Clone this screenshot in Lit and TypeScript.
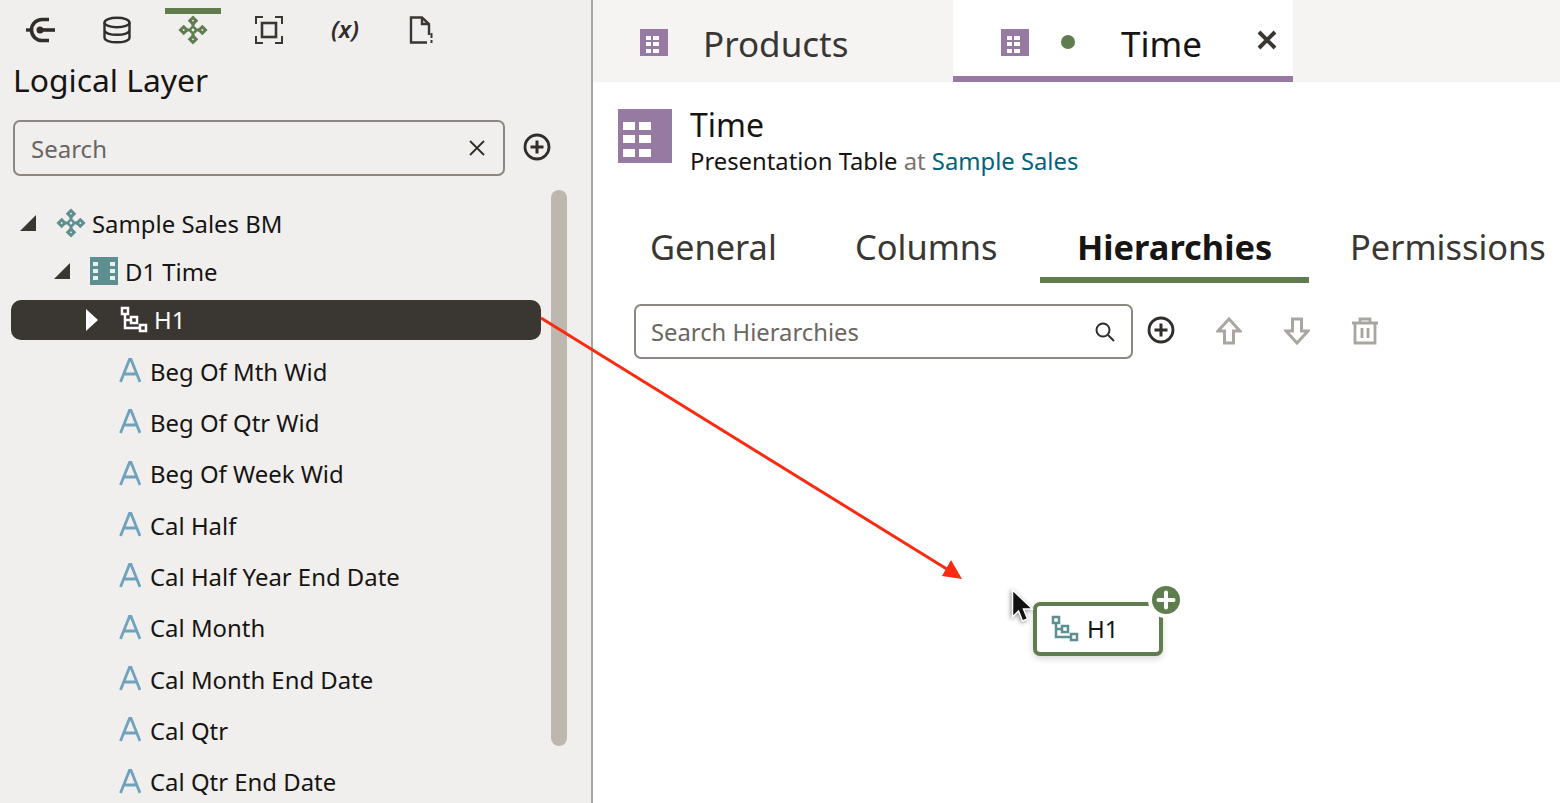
import { LitElement, html, css, svg } from 'lit';
import { customElement } from 'lit/decorators.js';

const ATTRIBUTES = [
  'Beg Of Mth Wid',
  'Beg Of Qtr Wid',
  'Beg Of Week Wid',
  'Cal Half',
  'Cal Half Year End Date',
  'Cal Month',
  'Cal Month End Date',
  'Cal Qtr',
  'Cal Qtr End Date',
];

const modelIcon = (color: string, size: number) => html`
  <svg width=${size} height=${size} viewBox="0 0 30 30" fill="none" stroke=${color} stroke-width="3">
    <path d="M15 2.500l3.200 3.200L15 8.900l-3.200-3.200zM15 21.100l3.200 3.200-3.200 3.200-3.200-3.200zM5.700 11.800l3.200 3.200-3.200 3.200L2.500 15zM24.300 11.800l3.200 3.200-3.200 3.200-3.200-3.200z" />
    <circle cx="15" cy="15" r="2.600" stroke-width="2.400" />
    <path d="M15 9v3.400M15 17.600V21M9 15h3.400M17.600 15H21" />
  </svg>
`;

const smallTableIcon = html`
  <svg width="28" height="27" viewBox="0 0 28 27">
    <rect width="28" height="27" fill="#967aa1" />
    <path fill="#fff" d="M6 7h5v4H6zM13 7h6v4h-6zM6 13h5v4H6zM13 13h6v4h-6zM6 20h5v4H6zM13 20h6v4h-6z" />
  </svg>
`;

const largeTableIcon = html`
  <svg width="54" height="54" viewBox="0 0 54 54">
    <rect width="54" height="54" fill="#967aa1" />
    <path fill="#fff" d="M5 13h12v8H5zM21 13h12v8H21zM5 26h12v8H5zM21 26h12v8H21zM5 40h12v8H5zM21 40h12v8H21z" />
  </svg>
`;

const hierarchyIcon = (color: string) => html`
  <svg width="28" height="28" viewBox="0 0 28 28" fill="none" stroke=${color} stroke-width="2.500">
    <rect x="2" y="2" width="6" height="6" />
    <rect x="11" y="11" width="6" height="6" />
    <rect x="20" y="19" width="6" height="6" />
    <path d="M5 8v14h15M5 14h6" />
  </svg>
`;

const attrIcon = svg`
  <path d="M1.500 24L10.500 1.500h1.500L21 24M5 16h12.500" fill="none" stroke="#6fa3bd" stroke-width="2.800" />
`;

const caret = (open: boolean, color: string) =>
  open
    ? html`<svg width="16" height="16" viewBox="0 0 16 16"><path d="M16 0v16H0z" fill=${color} /></svg>`
    : html`<svg width="14" height="24" viewBox="0 0 14 24"><path d="M1 1l12 11L1 23z" fill=${color} /></svg>`;

const plusCircle = html`
  <svg width="28" height="28" viewBox="0 0 28 28" fill="none" stroke="#312d2a">
    <circle cx="14" cy="14" r="12" stroke-width="2.800" />
    <path d="M7.500 14h13M14 7.500v13" stroke-width="3" />
  </svg>
`;

@customElement('tree-panel')
export class TreePanel extends LitElement {
  static styles = css`
    :host {
      display: flex;
      flex-direction: column;
      width: 591px;
      height: 803px;
      flex: none;
      box-sizing: border-box;
      background: #f1efed;
      overflow: hidden;
      color: #161513;
    }

    .toolbar {
      display: flex;
      height: 60px;
      padding-left: 3px;
    }

    .tool {
      width: 76px;
      height: 60px;
      box-sizing: border-box;
      display: flex;
      align-items: center;
      justify-content: center;
      position: relative;
    }

    .tool.active::before {
      content: '';
      position: absolute;
      left: 10px;
      right: 10px;
      top: 8px;
      height: 6px;
      background: #5f7d4f;
    }

    .fx {
      font: italic 600 24px 'Noto Sans', sans-serif;
      color: #312d2a;
      margin-top: -3px;
    }

    h1 {
      margin: 0;
      padding-left: 13px;
      font-size: 31.8px;
      line-height: 40px;
      font-weight: 400;
    }

    .search-row {
      display: flex;
      align-items: center;
      gap: 18px;
      margin: 20px 0 0 13px;
    }

    .search {
      box-sizing: border-box;
      width: 492px;
      height: 56px;
      border: 2px solid #8d8782;
      border-radius: 7px;
      padding: 0 18px 0 16px;
      display: flex;
      align-items: center;
      justify-content: space-between;
      font-size: 24px;
      color: #6b6661;
    }

    .add {
      display: flex;
      margin-top: -2px;
    }

    .body {
      display: flex;
      flex: 1;
      min-height: 0;
      margin-top: 14px;
    }

    .tree {
      width: 551px;
      flex: none;
      padding-top: 9px;
    }

    .row {
      display: flex;
      align-items: center;
      font-size: 23.9px;
      height: 48px;
      white-space: nowrap;
    }

    .root {
      padding-left: 20px;
      gap: 20px;
    }

    .root span {
      margin-left: -14px;
    }

    .dim {
      padding-left: 54px;
      gap: 20px;
    }

    .dim span {
      margin-left: -13px;
    }

    .selected {
      margin: 5px 10px 0 11px;
      height: 40px;
      border-radius: 10px;
      background: #3a3632;
      color: #fff;
      padding-left: 74px;
      gap: 21px;
    }

    .selected span {
      margin: -2px 0 0 -15px;
    }

    .attr {
      height: 51.33px;
      padding-left: 119px;
      gap: 9px;
    }

    .attrs {
      margin-top: 5.4px;
    }

    .thumb {
      width: 16px;
      height: 556px;
      border-radius: 8px;
      background: #bdb7b0;
    }
  `;

  render() {
    return html`
      <div class="toolbar">
        <div class="tool">
          <svg width="32" height="30" viewBox="0 0 32 30" fill="none" stroke="#312d2a">
            <path d="M24 4.500H17a10.500 10.500 0 0 0 0 21h7" stroke-width="3.600" />
            <path d="M1 15h6" stroke-width="3.400" />
            <path d="M16 15h14" stroke-width="3.600" />
            <circle cx="15" cy="15" r="3.500" fill="#312d2a" stroke="none" />
          </svg>
        </div>
        <div class="tool">
          <svg width="28" height="28" viewBox="0 0 28 28" fill="none" stroke="#312d2a" stroke-width="2.400">
            <ellipse cx="14" cy="6.500" rx="12.500" ry="4.800" />
            <path d="M1.500 6.500v15c0 3 5.600 4.800 12.500 4.800s12.500-1.800 12.500-4.800v-15M1.500 14c0 3 5.600 4.800 12.500 4.800S26.500 17 26.500 14" />
          </svg>
        </div>
        <div class="tool active">${modelIcon('#5f7d4f', 30)}</div>
        <div class="tool">
          <svg width="28" height="28" viewBox="0 0 28 28" fill="none" stroke="#3a3632">
            <path d="M1 8V1h7M20 1h7v7M27 20v7h-7M8 27H1v-7" stroke-width="2" />
            <rect x="7" y="7" width="14" height="14" stroke-width="2.600" />
          </svg>
        </div>
        <div class="tool"><span class="fx">(x)</span></div>
        <div class="tool">
          <svg width="24" height="28" viewBox="0 0 24 28" fill="none" stroke="#3a3632" stroke-width="2.400">
            <path d="M20 19V8l-7-6.500H2v25h16M13 1.500V8h7" />
            <path d="M22.500 17v5M22.500 24v3" stroke-width="2" />
          </svg>
        </div>
      </div>
      <h1>Logical Layer</h1>
      <div class="search-row">
        <div class="search">
          Search
          <svg width="16" height="16" viewBox="0 0 16 16" stroke="#312d2a" stroke-width="1.800"><path d="M1 1l14 14M15 1L1 15" /></svg>
        </div>
        <div class="add">${plusCircle}</div>
      </div>
      <div class="body">
        <div class="tree">
          <div class="row root">${caret(true, '#3a3632')}${modelIcon('#5e8f90', 30)}<span>Sample Sales BM</span></div>
          <div class="row dim">
            ${caret(true, '#3a3632')}
            <svg width="28" height="28" viewBox="0 0 28 28">
              <rect width="28" height="28" fill="#5e8f90" />
              <path fill="#e8f0f0" d="M3 5h5v4H3zM20 5h5v4h-5zM3 12h5v4H3zM20 12h5v4h-5zM3 19h5v4H3zM20 19h5v4h-5z" />
            </svg>
            <span>D1 Time</span>
          </div>
          <div class="row selected">${caret(false, '#fff')}${hierarchyIcon('#fff')}<span>H1</span></div>
          <div class="attrs">
            ${ATTRIBUTES.map(
              (name) => html`
                <div class="row attr">
                  <svg width="22" height="26" viewBox="0 0 22 26">${attrIcon}</svg>
                  <span>${name}</span>
                </div>
              `
            )}
          </div>
        </div>
        <div class="thumb"></div>
      </div>
    `;
  }
}

@customElement('detail-panel')
export class DetailPanel extends LitElement {
  static styles = css`
    :host {
      display: flex;
      flex-direction: column;
      flex: 1;
      min-width: 0;
      height: 803px;
      background: #fff;
      color: #161513;
      overflow: hidden;
    }

    .tabbar {
      display: flex;
      height: 82px;
      background: #f5f4f2;
      flex: none;
    }

    .tab {
      box-sizing: border-box;
      height: 82px;
      display: flex;
      align-items: center;
      font-size: 35px;
    }

    .tab span.label {
      margin-top: 2px;
    }

    .tab.products {
      width: 360px;
      padding: 2px 0 0 47px;
      gap: 35px;
      color: #3a3632;
    }

    .tab.time {
      width: 340px;
      background: #fff;
      border-bottom: 6px solid #967aa1;
      padding: 8px 0 0 48px;
    }

    .dot {
      width: 14px;
      height: 14px;
      border-radius: 50%;
      background: #5f7d4f;
      margin: 0 46px 0 32px;
    }

    .close {
      margin: -4px 0 0 55px;
    }

    .head {
      display: flex;
      align-items: flex-start;
      gap: 18px;
      margin: 26px 0 0 25px;
    }

    .head svg {
      margin-top: 1px;
    }

    .head-text {
      display: flex;
      flex-direction: column;
    }

    .title {
      font-size: 32px;
      line-height: 34px;
    }

    .sub {
      font-size: 23.8px;
      line-height: 38px;
    }

    .at {
      color: #7a746e;
    }

    .link {
      color: #04617c;
    }

    .tabs {
      display: flex;
      margin: 34px 0 0 28px;
      font-size: 34.4px;
      white-space: nowrap;
    }

    .subtab {
      box-sizing: border-box;
      flex: none;
      height: 69px;
      line-height: 66px;
      color: #3a3632;
    }

    .subtab.general {
      width: 205px;
      padding-left: 29px;
    }

    .subtab.columns {
      width: 214px;
      padding-left: 29px;
    }

    .subtab.on {
      width: 269px;
      padding-left: 37px;
      font-weight: 700;
      color: #161513;
      border-bottom: 6px solid #5f7d4f;
    }

    .subtab.perm {
      padding-left: 41px;
    }

    .actions {
      display: flex;
      align-items: center;
      margin: 21px 0 0 41px;
    }

    .search {
      box-sizing: border-box;
      width: 499px;
      height: 55px;
      border: 2px solid #8d8782;
      border-radius: 7px;
      padding: 0 16px 0 15px;
      display: flex;
      align-items: center;
      justify-content: space-between;
      font-size: 23.8px;
      color: #6b6661;
      margin-right: 14px;
    }

    .action {
      width: 68px;
      display: flex;
      justify-content: center;
      margin-left: -20px;
      margin-right: 20px;
    }

    .action svg {
      margin-top: -2px;
    }

    .action.plus svg {
      margin-top: -4px;
    }
  `;

  render() {
    return html`
      <div class="tabbar">
        <div class="tab products">${smallTableIcon}<span class="label">Products</span></div>
        <div class="tab time">
          ${smallTableIcon}
          <span class="dot"></span>
          <span class="label">Time</span>
          <svg class="close" width="20" height="20" viewBox="0 0 20 20" stroke="#3a3632" stroke-width="4"><path d="M2 2l16 16M18 2L2 18" /></svg>
        </div>
      </div>
      <div class="head">
        ${largeTableIcon}
        <div class="head-text">
          <div class="title">Time</div>
          <div class="sub">Presentation Table <span class="at">at</span> <span class="link">Sample Sales</span></div>
        </div>
      </div>
      <div class="tabs">
        <div class="subtab general">General</div>
        <div class="subtab columns">Columns</div>
        <div class="subtab on">Hierarchies</div>
        <div class="subtab perm">Permissions</div>
      </div>
      <div class="actions">
        <div class="search">
          Search Hierarchies
          <svg width="20" height="20" viewBox="0 0 20 20" fill="none" stroke="#312d2a" stroke-width="2"><circle cx="8" cy="8" r="6.500" /><path d="M13 13l6 6" /></svg>
        </div>
        <div class="action plus">${plusCircle}</div>
        <div class="action">
          <svg width="26" height="28" viewBox="0 0 26 28" fill="none" stroke="#a9a5a0" stroke-width="3"><path d="M13 2L2 14h6.500v12h9V14H24z" /></svg>
        </div>
        <div class="action">
          <svg width="26" height="28" viewBox="0 0 26 28" fill="none" stroke="#a9a5a0" stroke-width="3"><path d="M13 26L2 14h6.500V2h9v12H24z" /></svg>
        </div>
        <div class="action">
          <svg width="28" height="28" viewBox="0 0 28 28" fill="none" stroke="#a9a5a0" stroke-width="2.800"><path d="M1 6h26M9 6V2h10v4M4 6v20h20V6M11 11v10M17 11v10" /></svg>
        </div>
      </div>
    `;
  }
}

@customElement('app-root')
export class AppRoot extends LitElement {
  static styles = css`
    :host {
      display: flex;
      position: relative;
      width: 1560px;
      height: 803px;
      overflow: hidden;
      font-family: 'Noto Sans', sans-serif;
    }

    .divider {
      width: 2px;
      flex: none;
      background: #a9a5a0;
    }

    .arrow {
      position: absolute;
      inset: 0;
      pointer-events: none;
    }

    .ghost {
      position: absolute;
      left: 1033px;
      top: 602px;
      width: 130px;
      height: 54px;
      box-sizing: border-box;
      border: 4px solid #5f7d4f;
      border-radius: 7px;
      background: #fff;
      box-shadow: 0 3px 6px rgba(0, 0, 0, 0.15);
      display: flex;
      align-items: center;
      gap: 8px;
      padding-left: 14px;
      font-size: 24px;
      color: #161513;
    }

    .ghost span {
      margin-top: -2px;
    }

    .badge {
      position: absolute;
      left: 1148px;
      top: 582px;
      width: 36px;
      height: 36px;
    }

    .pointer {
      position: absolute;
      left: 1010px;
      top: 588px;
      filter: drop-shadow(-1px 1px 2px rgba(0, 0, 0, 0.45));
    }
  `;

  render() {
    return html`
      <tree-panel></tree-panel>
      <div class="divider"></div>
      <detail-panel></detail-panel>
      <svg class="arrow" width="1560" height="803" viewBox="0 0 1560 803">
        <path d="M541 318L950 571" stroke="#fb2a10" stroke-width="3" fill="none" />
        <path d="M962 579L942 576l9-16z" fill="#fb2a10" />
      </svg>
      <div class="ghost">${hierarchyIcon('#5e8f90')}<span>H1</span></div>
      <svg class="badge" viewBox="0 0 36 36">
        <circle cx="18" cy="18" r="18" fill="#fff" />
        <circle cx="18" cy="18" r="14" fill="#5f7d4f" />
        <path d="M18 10.500v15M10.500 18h15" stroke="#fff" stroke-width="4" stroke-linecap="round" />
      </svg>
      <svg class="pointer" width="24" height="36" viewBox="0 0 24 36">
        <path d="M2.500 2v27l6-6 4 10 5-2-4-10h9z" fill="#111" stroke="#fff" stroke-width="1.500" />
      </svg>
    `;
  }
}
